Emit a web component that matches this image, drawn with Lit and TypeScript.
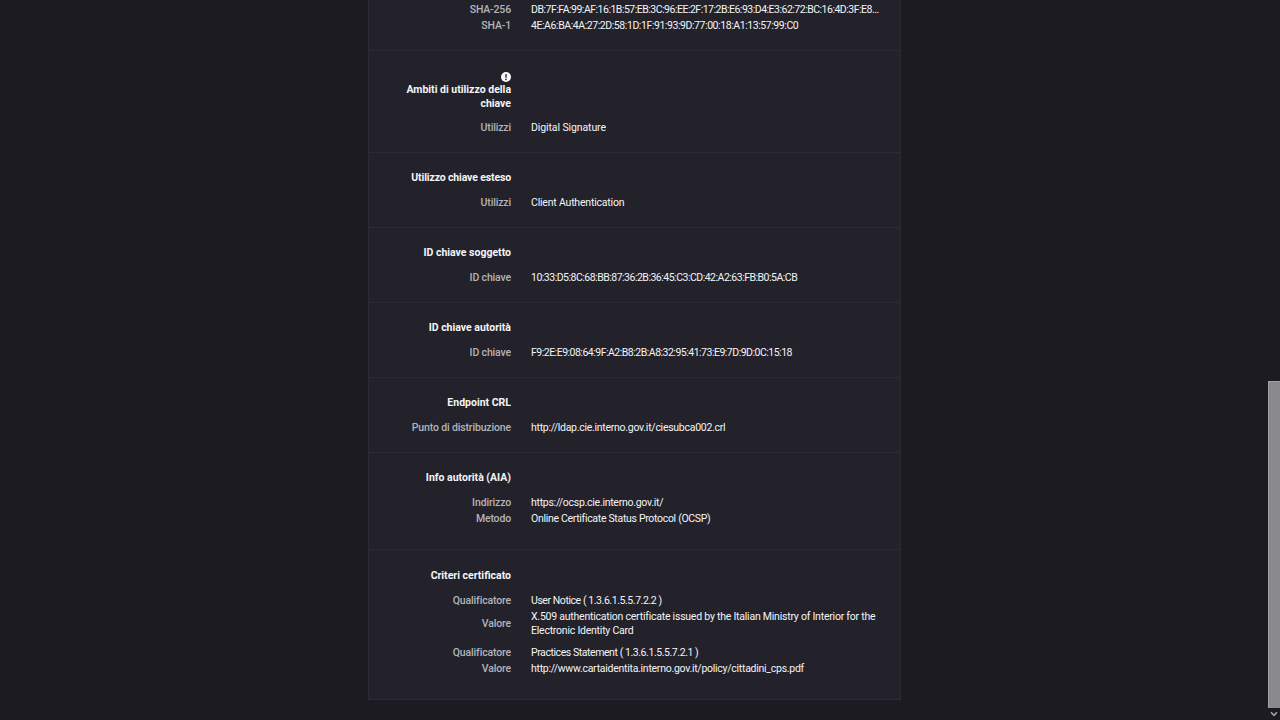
import { LitElement, html, css } from "lit";
import { customElement } from "lit/decorators.js";

type Row = [string, string | string[], string?];
interface Section { title?: string; tight?: boolean; icon?: boolean; groups: Row[][]; multi?: boolean; last?: boolean }

const sections: Section[] = [
  { groups: [[
    ["SHA-256", "DB:7F:FA:99:AF:16:1B:57:EB:3C:96:EE:2F:17:2B:E6:93:D4:E3:62:72:BC:16:4D:3F:E8...", "hex"],
    ["SHA-1", "4E:A6:BA:4A:27:2D:58:1D:1F:91:93:9D:77:00:18:A1:13:57:99:C0", "hex1"],
  ]] },
  { title: "Ambiti di utilizzo della chiave", icon: true, groups: [[["Utilizzi", "Digital Signature"]]] },
  { title: "Utilizzo chiave esteso", tight: true, groups: [[["Utilizzi", "Client Authentication", "client"]]] },
  { title: "ID chiave soggetto", groups: [[["ID chiave", "10:33:D5:8C:68:BB:87:36:2B:36:45:C3:CD:42:A2:63:FB:B0:5A:CB", "hex"]]] },
  { title: "ID chiave autorità", groups: [[["ID chiave", "F9:2E:E9:08:64:9F:A2:B8:2B:A8:32:95:41:73:E9:7D:9D:0C:15:18", "hex"]]] },
  { title: "Endpoint CRL", groups: [[["Punto di distribuzione", "http://ldap.cie.interno.gov.it/ciesubca002.crl", "url"]]] },
  { title: "Info autorità (AIA)", multi: true, groups: [[
    ["Indirizzo", "https://ocsp.cie.interno.gov.it/", "url"],
    ["Metodo", "Online Certificate Status Protocol (OCSP)", "proto"],
  ]] },
  { title: "Criteri certificato", multi: true, last: true, groups: [
    [
      ["Qualificatore", "User Notice ( 1.3.6.1.5.5.7.2.2 )", "hex1"],
      ["Valore", ["X.509 authentication certificate issued by the Italian Ministry of Interior for the", "Electronic Identity Card"], "long"],
    ],
    [
      ["Qualificatore", "Practices Statement ( 1.3.6.1.5.5.7.2.1 )", "hex1"],
      ["Valore", "http://www.cartaidentita.interno.gov.it/policy/cittadini_cps.pdf", "url"],
    ],
  ] },
];

@customElement("app-root")
export class AppRoot extends LitElement {
  static styles = css`
    :host { display: flex; height: 720px; overflow: hidden; background: #1c1b22; color: #f4f4f7;
      font-family: "Roboto", "Liberation Sans", sans-serif; font-size: 10.5px; }
    .page { flex: 1; display: flex; flex-direction: column; justify-content: flex-end; align-items: center;
      padding: 0 0 20px 1px; min-width: 0; }
    .card { width: 533px; box-sizing: border-box; background: #23222b; border: 1px solid #2c2b33; border-top: none; flex: none; }
    .section { padding: 17px 0 16px; border-bottom: 1px solid #2c2b33; }
    .section.last { border-bottom: none; padding-top: 18px; }
    .section.icon { padding-top: 21px; }
    .head { width: 142px; box-sizing: border-box; text-align: right; font-weight: 700; line-height: 16px; margin-bottom: 9px; }
    .head.tight { letter-spacing: -0.14px; }
    .section.icon .head { line-height: 13.5px; margin-bottom: 10px; padding-left: 24px; }
    .info { display: block; width: 10px; height: 10px; margin: 0 0 1px auto; }
    .section.multi .group { margin-bottom: 6px; }
    .row { display: grid; grid-template-columns: 142px 349px; column-gap: 20px; align-items: center; }
    .label { text-align: right; color: #b4b4b8; font-weight: 500; line-height: 16px; white-space: nowrap; letter-spacing: -0.15px; }
    .value { line-height: 16px; white-space: nowrap; letter-spacing: -0.1px; }
    .value.client { letter-spacing: -0.2px; }
    .value.url { letter-spacing: -0.27px; }
    .value.proto { letter-spacing: -0.31px; }
    .value.long { letter-spacing: -0.23px; }
    .value.hex { letter-spacing: -0.5px; }
    .value.hex1 { letter-spacing: -0.43px; }
    .value.wrap { line-height: 14px; padding: 1px 0; }
    .bar { width: 12px; flex: none; display: flex; flex-direction: column; }
    .space { flex: 1; }
    .thumb { height: 327px; box-sizing: border-box; background: #8a8a8c; border-top: 1px solid #a2a2a4; border-left: 1px solid #a2a2a4; }
    .down { height: 12px; display: flex; align-items: center; justify-content: center; }
    .down svg { display: block; width: 8px; height: 6px; }
  `;

  private renderValue(v: string | string[], kind = "") {
    if (Array.isArray(v)) return html`<div class="value wrap ${kind}">${v.map((l) => html`<div>${l}</div>`)}</div>`;
    return html`<div class="value ${kind}">${v}</div>`;
  }

  render() {
    return html`
      <div class="page">
        <div class="card">
          ${sections.map((s) => html`
            <div class="section ${s.multi ? "multi" : ""} ${s.icon ? "icon" : ""} ${s.last ? "last" : ""}">
              ${s.title ? html`<div class="head ${s.tight ? "tight" : ""}">
                ${s.icon ? html`<svg class="info" viewBox="0 0 10 10"><circle cx="5" cy="5" r="5" fill="#fbfbfe"/><rect x="4.3" y="2" width="1.4" height="3.8" rx=".5" fill="#23222b"/><circle cx="5" cy="7.3" r=".85" fill="#23222b"/></svg>` : ""}
                ${s.title}</div>` : ""}
              ${s.groups.map((g) => html`<div class="group">
                ${g.map(([l, v, k]) => html`<div class="row"><div class="label">${l}</div>${this.renderValue(v, k)}</div>`)}
              </div>`)}
            </div>`)}
        </div>
      </div>
      <div class="bar">
        <div class="space"></div>
        <div class="thumb"></div>
        <div class="down"><svg viewBox="0 0 8 6"><path d="M1 1.2 4 4.4 7 1.2" fill="none" stroke="#a2a2a4" stroke-width="1.6"/></svg></div>
      </div>
    `;
  }
}
